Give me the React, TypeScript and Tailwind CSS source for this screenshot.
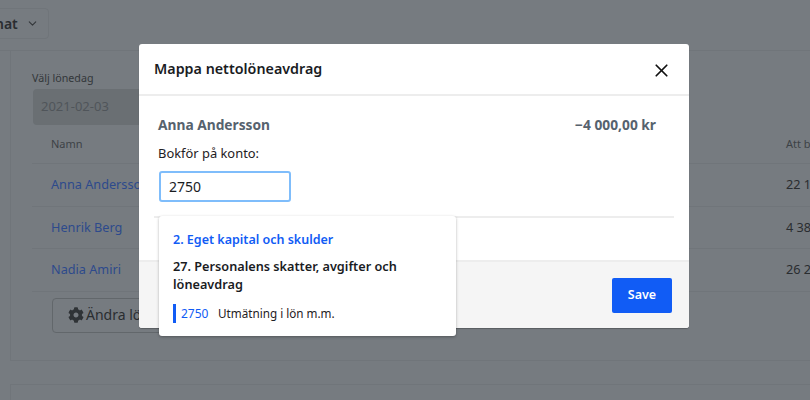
import { ChevronDown, X } from "lucide-react";
import { FaCog } from "react-icons/fa";

const people = [
  { name: "Anna Andersson", amount: "22 1" },
  { name: "Henrik Berg", amount: "4 38" },
  { name: "Nadia Amiri", amount: "26 2" },
];

function Background() {
  return (
    <div className="flex h-[400px] w-[810px] flex-col overflow-hidden bg-[#767b80]">
      {/* top bar */}
      <div className="flex h-[51px] shrink-0 items-start border-b border-[#70757a] pt-2">
        <div className="ml-[-9px] flex h-[31px] w-[58px] shrink-0 items-center justify-between rounded-r border border-[#70757a] pl-[3px] pr-[9px] text-sm font-semibold text-[#2a2d30]">
          <span>nat</span>
          <ChevronDown size={13} className="text-[#33373a]" />
        </div>
      </div>

      {/* page card, runs past the right edge of the window */}
      <div className="ml-[10px] flex h-[310px] w-[830px] shrink-0 flex-col border-b border-l border-[#70757a] pl-[21px] pr-[30px] pt-[19px]">
        <div className="h-4 text-[10.7px] leading-4 text-[#33373a]">Välj lönedag</div>
        <div className="ml-[1px] mt-[3px] flex h-9 w-[150px] items-center rounded-sm bg-[#6a6f73] px-2 text-[13px] text-[#50555a]">2021-02-03</div>
        <div className="flex h-[39px] items-center justify-between border-b border-[#70757a] pl-[19px] text-[11px] text-[#3d4246]">
          <span>Namn</span>
          <span className="w-[24px] whitespace-nowrap">Att b</span>
        </div>
        {people.map((p) => (
          <div key={p.name} className="flex h-[42.5px] items-center justify-between border-b border-[#70757a] pl-[19px] text-[12.7px]">
            <span className="text-[#2d4a8c]">{p.name}</span>
            <span className="w-[24px] whitespace-nowrap text-[#2a2d30]">{p.amount}</span>
          </div>
        ))}
        <div className="ml-[20px] mt-[6px] flex h-[35px] w-[150px] items-center gap-[2px] rounded-sm border border-[#62676b] pl-[15px] text-sm text-[#2a2d30]">
          <FaCog size={16} className="text-[#2f3336]" />
          <span>Ändra lön</span>
        </div>
      </div>

      <div className="ml-[10px] mt-[23px] w-[830px] flex-1 border-l border-t border-[#70757a]" />
    </div>
  );
}

export default function App() {
  return (
    <div className="relative h-[400px] w-[810px] overflow-hidden font-['Noto_Sans',sans-serif]">
      <Background />

      {/* modal */}
      <div className="absolute left-[139px] top-[44px] flex h-[284px] w-[550px] flex-col overflow-hidden rounded-[3px] bg-white shadow-[0_1px_1px_rgba(0,0,0,0.25)]">
        <div className="flex h-[52px] shrink-0 items-center justify-between border-b-2 border-[#ededed] pl-[15px] pr-[17px]">
          <h2 className="text-[14.3px] font-semibold text-[#1a1c1f]">Mappa nettolöneavdrag</h2>
          <X size={21} strokeWidth={2} className="mt-[2px] text-[#111]" />
        </div>

        <div className="flex flex-1 flex-col px-[15px]">
          <div className="mt-[19px] flex items-center justify-between pl-1 pr-[18px] text-[13.75px] font-bold leading-5 text-[#56626e]">
            <span>Anna Andersson</span>
            <span>−4 000,00 kr</span>
          </div>
          <div className="mt-[9px] pl-1 text-[12.9px] leading-[18px] text-[#1f2124]">Bokför på konto:</div>
          <div className="ml-[5px] mt-[9px] flex h-[31px] w-[132px] items-center rounded-[3px] border-2 border-[#7fbdfb] px-2 text-sm text-[#1a1c1f]">2750</div>
          <div className="mt-[14px] h-[2px] bg-[#ededed]" />
        </div>

        <div className="flex h-[68px] shrink-0 items-center justify-end border-t-2 border-[#ededed] bg-[#f5f5f5] pr-[17px]">
          <button className="h-[35px] w-[60px] rounded-[2px] bg-[#115cf5] text-[12.5px] font-semibold text-white">Save</button>
        </div>
      </div>

      {/* account dropdown */}
      <div className="absolute left-[159px] top-[216px] h-[120px] w-[297px] rounded-[3px] bg-white px-[14px] pt-[15px] shadow-[0_1px_3px_rgba(0,0,0,0.3)]">
        <div className="text-[12.5px] font-semibold leading-[18px] text-[#115cf5]">2. Eget kapital och skulder</div>
        <div className="mt-[8px] text-[12.7px] font-semibold leading-[18px] text-[#1a1c1f]">27. Personalens skatter, avgifter och löneavdrag</div>
        <div className="mt-[11px] flex items-center text-[11.7px]">
          <span className="h-[19px] w-[3px] bg-[#115cf5]" />
          <span className="ml-[5px] w-[37px] text-xs text-[#115cf5]">2750</span>
          <span className="text-[#1f2124]">Utmätning i lön m.m.</span>
        </div>
      </div>
    </div>
  );
}
